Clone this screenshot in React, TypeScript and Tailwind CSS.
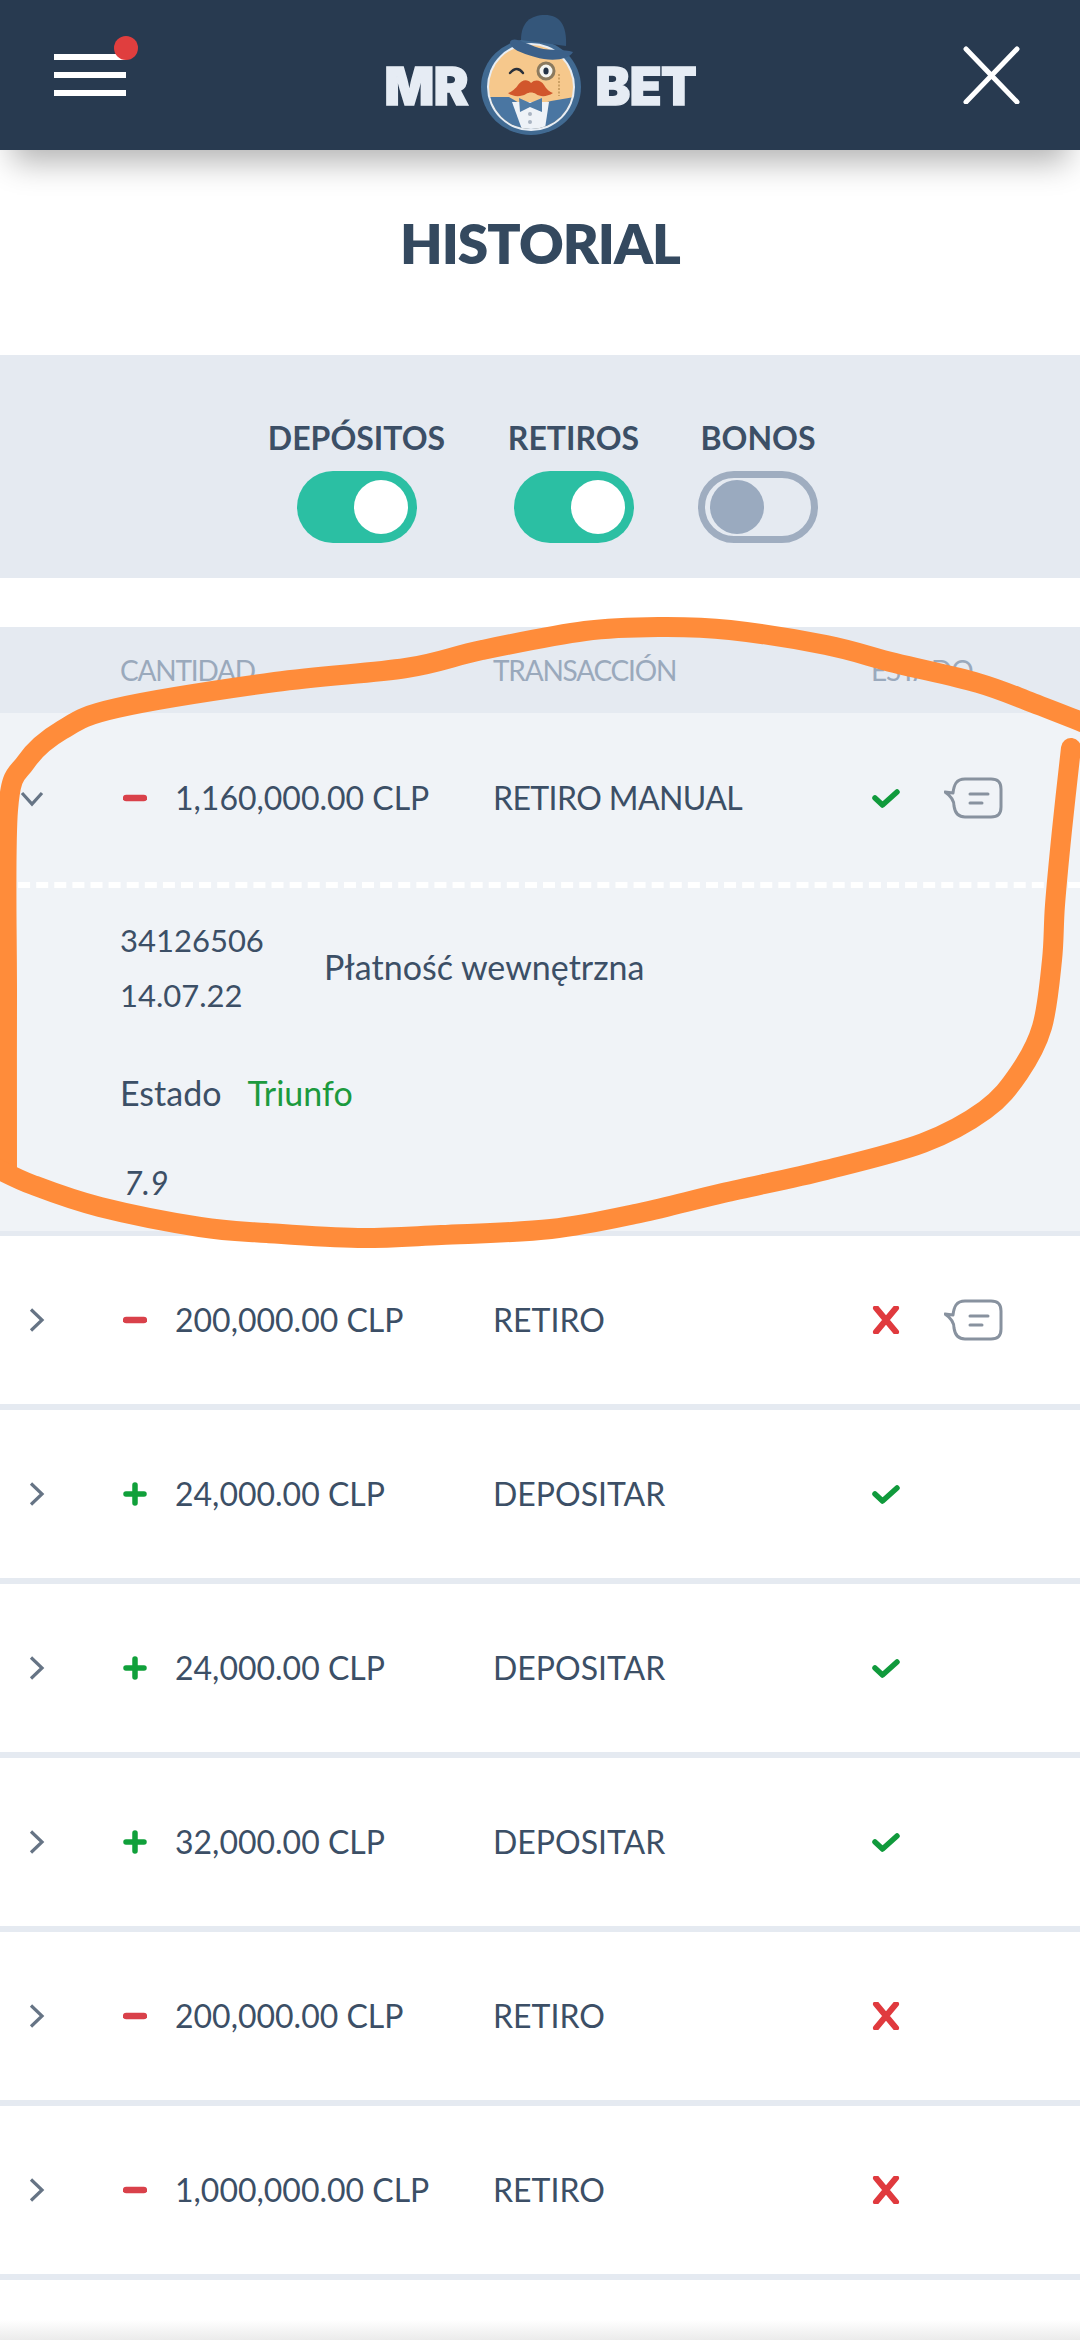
import React from "react";

const topStroke: [number, number][] = [
  [1092, 726], [1033, 703], [978, 683], [895, 663], [826, 645], [730, 630], [661, 627], [585, 631], [482, 650], [406, 668], [275, 682], [117, 708], [62, 730], [26, 762], [8, 810], [7, 1000], [7, 1172],
];
const bottomStroke: [number, number][] = [
  [-8, 1166], [33, 1185], [100, 1207], [200, 1227], [267, 1233], [358, 1238], [441, 1235], [551, 1229], [640, 1213], [723, 1193], [826, 1170], [923, 1143], [985, 1110], [1019, 1073], [1042, 1027], [1052, 960], [1055, 905], [1062, 830], [1071, 748],
];

function smooth(p: [number, number][]) {
  let d = `M${p[0][0]} ${p[0][1]}`;
  for (let i = 0; i < p.length - 1; i++) {
    const a = p[Math.max(i - 1, 0)], b = p[i], c = p[i + 1], e = p[Math.min(i + 2, p.length - 1)];
    d += ` C${b[0] + (c[0] - a[0]) / 6} ${b[1] + (c[1] - a[1]) / 6} ${c[0] - (e[0] - b[0]) / 6} ${c[1] - (e[1] - b[1]) / 6} ${c[0]} ${c[1]}`;
  }
  return d;
}

const Logo = () => (
  <div className="flex items-center font-['Inter',sans-serif] font-black text-[52px] leading-none text-[#e6ecf4] tracking-[-0.5px] [-webkit-text-stroke:1.5px_#e6ecf4]">
    <span className="mt-[24px] w-[94px] text-left">MR</span>
    <svg viewBox="480 10 110 130" className="w-[110px] h-[130px]">
      <defs>
        <clipPath id="c"><circle cx="532" cy="87" r="42" /></clipPath>
      </defs>
      <ellipse cx="532" cy="87" rx="50" ry="48" fill="#416a92" />
      <circle cx="532" cy="87" r="44" fill="#e8eef5" />
      <circle cx="532" cy="87" r="42" fill="#f6c88c" />
      <g clipPath="url(#c)">
        <path d="M490 97 H510 L522 104 H541 L552 101 L575 97 V135 H490Z" fill="#4a76a2" />
        <path d="M513 102 L550 102 L545 135 L525 135Z" fill="#eef2f7" />
        <path d="M520 98 L531 103 L543 98 L543 112 L531 107 L521 112Z" fill="#4f7ba6" />
        <circle cx="531" cy="114" r="2" fill="#a9b4c2" />
        <circle cx="531" cy="122" r="2" fill="#a9b4c2" />
      </g>
      <path d="M511 73 Q518 65 524 73" stroke="#29303a" strokeWidth="2.4" fill="none" strokeLinecap="round" />
      <circle cx="547" cy="71" r="8" fill="#f5f5f0" stroke="#8b7a5e" strokeWidth="3" />
      <ellipse cx="547" cy="71" rx="2.6" ry="3.6" fill="#233246" />
      <path d="M560 74 V96" stroke="#a37a3d" strokeWidth="1" strokeDasharray="2 1.5" />
      <path d="M509 93 C513 92 517 88 519 85 C523 79 529 79 532 83 C536 79 542 80 545 85 C547 89 551 92 554 93 C548 97 541 97 537 94 C534 92 530 92 527 94 C522 97 514 97 509 93Z" fill="#d1562c" />
      <path d="M522 40 C522 22 532 15 546 15 C560 15 568 24 567 46 Z" fill="#34567a" />
      <path d="M511 42 C515 36 522 42 540 48 C552 51 565 49 574 52 C570 60 552 62 536 57 C522 53 511 49 511 42Z" fill="#3b6089" />
    </svg>
    <span className="mt-[24px] ml-[7px] w-[100px]">BET</span>
  </div>
);

const Toggle = ({ on }: { on: boolean }) => (
  <div className={on ? "w-[120px] h-[72px] rounded-full bg-[#2bbfa3] flex items-center justify-end pr-[9px]" : "w-[120px] h-[72px] rounded-full border-[7px] border-[#9fadc0] flex items-center pl-[5px]"}>
    <div className={on ? "w-[54px] h-[54px] rounded-full bg-white" : "w-[54px] h-[54px] rounded-full bg-[#9aaabf]"} />
  </div>
);

const Chevron = ({ open }: { open?: boolean }) => (
  <svg width="24" height="24" viewBox="0 0 24 24" fill="none" stroke="#667485" strokeWidth="3.2" className={open ? "ml-[20px]" : "ml-[28px]"}>
    {open ? <path d="M2 7 L12 18 L22 7" /> : <path d="M3 1.5 L14 12 L3 22.5" />}
  </svg>
);

const Sign = ({ plus }: { plus: boolean }) => (
  <svg width="24" height="24" viewBox="0 0 24 24" className="mr-[28px] shrink-0">
    {plus ? <path d="M12 3 V21 M3 12 H21" stroke="#10a03a" strokeWidth="5.5" strokeLinecap="round" /> : <path d="M3 12 H21" stroke="#d9414a" strokeWidth="6.5" strokeLinecap="round" />}
  </svg>
);

const Status = ({ ok }: { ok: boolean }) => (
  <svg width="28" height="28" viewBox="0 0 28 28" fill="none" className="shrink-0">
    {ok ? <path d="M3 14 L10.5 21 L25 8" stroke="#109a3c" strokeWidth="5.5" strokeLinecap="round" strokeLinejoin="round" />
      : <path d="M4 2 L24 26 M24 2 L4 26" stroke="#e03a3e" strokeWidth="6" strokeLinecap="round" />}
  </svg>
);

const Comment = () => (
  <svg width="60" height="42" viewBox="0 0 60 42" fill="none" stroke="#88929f" strokeWidth="3" className="ml-[44px]">
    <path d="M1 15 L9 16 C10 8 12 2 21 2 H47 C54 2 57 5 57 12 V30 C57 37 54 40 47 40 H21 C14 40 11 36 10 29 C10 24 7 19 1 15Z" strokeLinejoin="round" />
    <path d="M26 17 H44 M26 26 H38" strokeLinecap="round" />
  </svg>
);

const Row = ({ plus, amount, type, ok, comment, open, typeClass }: { plus: boolean; amount: string; type: string; ok: boolean; comment?: boolean; open?: boolean; typeClass?: string }) => (
  <div className={open ? "h-[169px] flex items-center" : "h-[174px] border-b-[6px] border-[#e5eaf1] flex items-center"}>
    <div className="w-[123px] shrink-0"><Chevron open={open} /></div>
    <Sign plus={plus} />
    <div className="w-[318px] shrink-0">{amount}</div>
    <div className={`w-[379px] shrink-0 ${typeClass ?? ""}`}>{type}</div>
    <Status ok={ok} />
    {comment && <Comment />}
  </div>
);

const filters: { label: string; on: boolean; width: string }[] = [
  { label: "DEPÓSITOS", on: true, width: "w-[179px]" },
  { label: "RETIROS", on: true, width: "w-[135px]" },
  { label: "BONOS", on: false, width: "w-[114px]" },
];

export default function App() {
  return (
    <div className="relative w-[1080px] h-[2340px] overflow-hidden bg-white font-['Lato',sans-serif] text-[32px] text-[#3c4f66]">
      <header className="relative h-[150px] bg-[#283a50] grid grid-cols-[1fr_auto_1fr] items-center shadow-[0_24px_30px_-12px_rgba(0,0,0,0.3)]">
        <div className="relative ml-[54px] w-[72px] flex flex-col gap-[12px]">
          <div className="h-[6px] bg-white" />
          <div className="h-[6px] bg-white" />
          <div className="h-[6px] bg-white" />
          <div className="absolute left-[60px] top-[-18px] w-[24px] h-[24px] rounded-full bg-[#e03e3e]" />
        </div>
        <Logo />
        <div className="flex justify-end pr-[60px]">
          <svg width="58" height="58" viewBox="0 0 58 58" fill="none" stroke="#fff" strokeWidth="5" strokeLinecap="round"><path d="M4 3 L55 56 M55 3 L4 56" /></svg>
        </div>
      </header>

      <h1 className="h-[205px] flex items-center justify-center pb-[18px] text-[55px] font-extrabold text-[#34495f] tracking-[-1px]">HISTORIAL</h1>

      <section className="h-[223px] bg-[#e5eaf1] flex justify-center pt-[64px] gap-[60px] pl-[2px]">
        {filters.map((f) => (
          <div key={f.label} className={`${f.width} flex flex-col items-center`}>
            <div className="h-[38px] leading-[38px] font-bold whitespace-nowrap">{f.label}</div>
            <div className="mt-[14px]"><Toggle on={f.on} /></div>
          </div>
        ))}
      </section>

      <div className="mt-[49px] h-[86px] bg-[#e5eaf1] grid grid-cols-[493px_378px_1fr] items-center text-[28px] tracking-[-1.2px] text-[#9aa9bc]">
        <div className="pl-[120px]">CANTIDAD</div>
        <div>TRANSACCIÓN</div>
        <div>ESTADO</div>
      </div>

      <section className="h-[523px] bg-[#f0f3f7] border-b-[5px] border-[#e5eaf1]">
        <Row open plus={false} amount="1,160,000.00 CLP" type="RETIRO MANUAL" ok={true} comment typeClass="tracking-[-0.6px]" />
        <div className="border-t-[6px] border-dashed border-white" />
        <div className="pl-[120px] pt-[25px] flex items-center">
          <div className="w-[204px] leading-[55px] text-[31px]">
            <div>34126506</div>
            <div>14.07.22</div>
          </div>
          <div className="text-[34px] leading-[44px] mb-[2px]">Płatność wewnętrzna</div>
        </div>
        <div className="pl-[120px] mt-[48px] leading-[44px] flex text-[34px]">
          <span>Estado</span>
          <span className="ml-[26px] text-[#1c9a3e]">Triunfo</span>
        </div>
        <div className="pl-[124px] mt-[46px] leading-[44px] italic">7.9</div>
      </section>

      <Row plus={false} amount="200,000.00 CLP" type="RETIRO" ok={false} comment />
      <Row plus amount="24,000.00 CLP" type="DEPOSITAR" ok />
      <Row plus amount="24,000.00 CLP" type="DEPOSITAR" ok />
      <Row plus amount="32,000.00 CLP" type="DEPOSITAR" ok />
      <Row plus={false} amount="200,000.00 CLP" type="RETIRO" ok={false} />
      <Row plus={false} amount="1,000,000.00 CLP" type="RETIRO" ok={false} />
      <div className="mt-[40px] h-[20px] bg-gradient-to-b from-white to-[#ebebeb]" />

      <svg className="absolute inset-0 pointer-events-none" width="1080" height="2340" fill="none">
        <path d={smooth(topStroke)} stroke="#ff8c3a" strokeWidth="20" strokeLinecap="round" strokeLinejoin="round" />
        <path d={smooth(bottomStroke)} stroke="#ff8c3a" strokeWidth="20" strokeLinecap="round" strokeLinejoin="round" />
      </svg>
    </div>
  );
}
